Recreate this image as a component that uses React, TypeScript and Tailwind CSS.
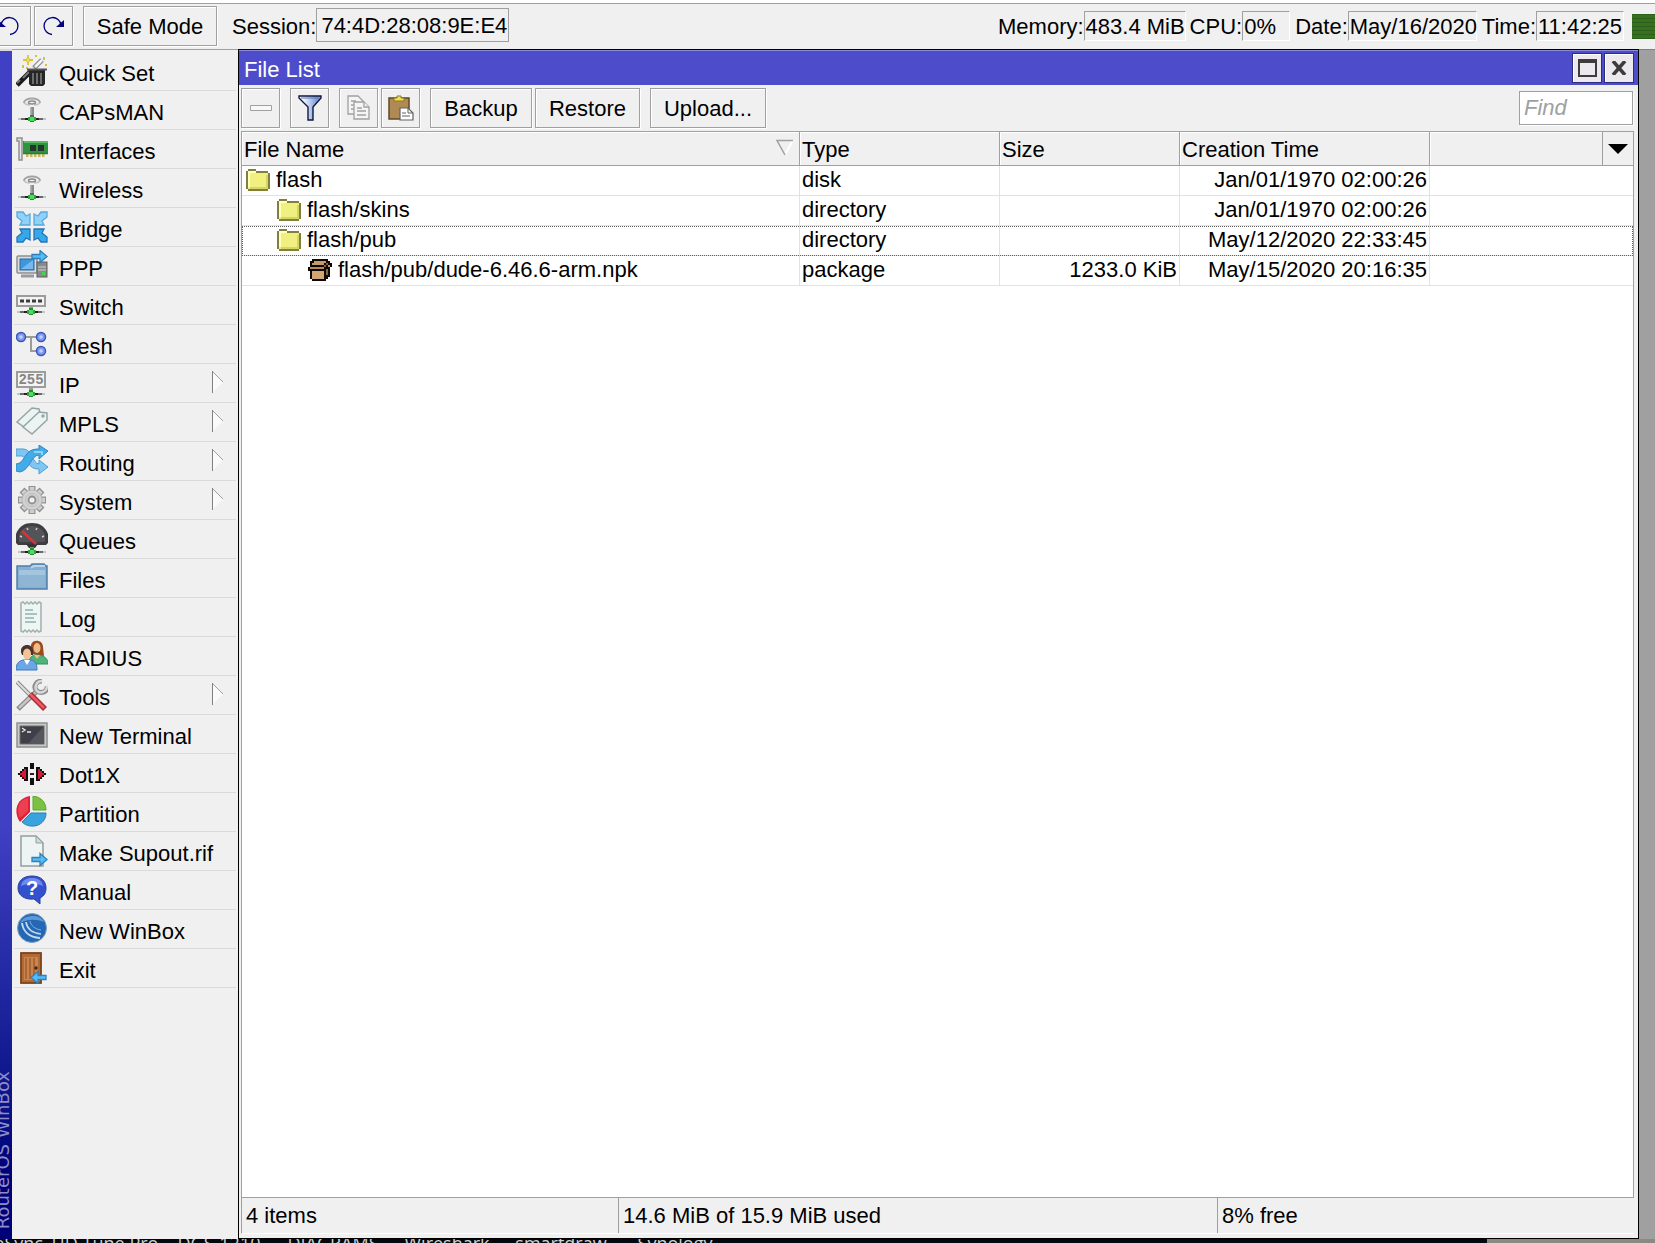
import { ReactNode } from 'react'

const BEVEL = 'border border-[#a0a0a0] shadow-[1px_1px_0_#fff,inset_1px_1px_0_#fff]'

/* ---------- shared icon parts ---------- */

function Net({ x = 16, y }: { x?: number; y: number }) {
  return (
    <g shapeRendering="crispEdges">
      <rect x={x - 14} y={y - 1} width="28" height="2" fill="#c4c4c4" />
      <rect x={x - 11} y={y - 1} width="22" height="2" fill="#6a6a6a" />
      <rect x={x - 7} y={y - 1} width="14" height="2" fill="#202020" />
      <rect x={x - 2} y={y - 4} width="4" height="7" fill="#268a34" />
      <rect x={x - 4} y={y - 2} width="8" height="4" fill="#2fa53f" />
      <rect x={x - 2} y={y - 2} width="4" height="4" fill="#4fdc5e" />
    </g>
  )
}

function BlueArrow({ x, y, flip }: { x: number; y: number; flip?: boolean }) {
  return (
    <path
      d="M0 4.500h8V.5l7 6-7 6v-4H0z"
      fill="#55bdf5"
      stroke="#2f7fbd"
      strokeWidth="1.300"
      transform={flip ? `translate(${x + 15} ${y}) scale(-1 1)` : `translate(${x} ${y})`}
    />
  )
}

const antenna = (
  <>
    <path d="M8 9c0-6 16-6 16 0" fill="none" stroke="#a4a4a4" strokeWidth="2" />
    <path d="M8 9c2 2 4 2 6 2M24 9c-2 2-4 2-6 2" fill="none" stroke="#c2c2c2" strokeWidth="1.500" />
    <ellipse cx="16" cy="8.500" rx="3.500" ry="1.500" fill="#eee" stroke="#8a8a8a" strokeWidth="1.500" />
    <rect x="14" y="13" width="4" height="10" fill="#8c8c8c" />
    <rect x="14" y="13" width="1.500" height="10" fill="#b4b4b4" />
    <Net y={25} />
  </>
)

const icons: Record<string, ReactNode> = {
  wizard: (
    <>
      <path d="M12 0v10M7 5h10" stroke="#dcc436" strokeWidth="1.800" />
      <path d="M9.500 2.500l5 5m0-5l-5 5" stroke="#eadb7c" />
      <path d="M20 0v2M28 2v3M7 10v3M30 9v2M11 12v2" stroke="#d8c040" strokeWidth="2" />
      <path d="M18 13l8-8" stroke="#8a8a8a" strokeWidth="5" />
      <path d="M19 12l7-7" stroke="#f4f4f4" strokeWidth="2.500" />
      <path d="M1 30l14-14" stroke="#1a1a1a" strokeWidth="5" />
      <path d="M1 28l3-3M7 23l6-6" stroke="#777" strokeWidth="2" />
      <path d="M13 15h16v14l-2 2H15l-2-2z" fill="#262626" />
      <path d="M17 18v11M21 18v11M25 18v11" stroke="#6c6c6c" strokeWidth="2" />
      <path d="M11 14.500h20" stroke="#555" strokeWidth="2" />
    </>
  ),
  antenna,
  card: (
    <>
      <path d="M1 5h5v22H3V8H1z" fill="#e4e4e4" stroke="#909090" strokeWidth="1.500" />
      <rect x="7" y="8" width="25" height="12" fill="#2f9440" />
      <rect x="8" y="8" width="24" height="2" fill="#5cb968" />
      <rect x="14" y="12" width="6" height="6" fill="#26352a" />
      <rect x="22" y="12" width="6" height="6" fill="#26352a" />
      <path d="M10 22h20" stroke="#c9b75a" strokeWidth="4" strokeDasharray="2.500 1.500" />
      <path d="M7 20.500h25" stroke="#2d7a3a" strokeWidth="1.500" />
    </>
  ),
  bridge: (
    <g strokeWidth="1.300">
      <g fill="#8ed2fa" stroke="#5aa8dc">
        <path d="M1 1h6l3 4 4-2v11H4l2-4-5-4z" />
        <path d="M31 1h-6l-3 4-4-2v11h10l-2-4 5-4z" />
      </g>
      <g fill="#35a8ec" stroke="#2474b4">
        <path d="M1 31h6l3-4 4 2V18H4l2 4-5 4z" />
        <path d="M31 31h-6l-3-4-4 2V18h10l-2 4 5 4z" />
      </g>
    </g>
  ),
  ppp: (
    <>
      <rect x="1" y="6" width="20" height="17" rx="1" fill="#dcdcdc" stroke="#8a8f94" strokeWidth="1.500" />
      <rect x="4" y="9" width="14" height="11" fill="#3f97da" stroke="#2a69a2" />
      <path d="M5 19L17 10v9z" fill="#74baf0" />
      <path d="M5 26h13" stroke="#9a9a9a" strokeWidth="3" />
      <rect x="21" y="12" width="10" height="15" fill="#8a8a8a" stroke="#5e5e5e" />
      <path d="M22 17h8M22 20h8" stroke="#d0d0d0" />
      <rect x="26" y="22" width="3" height="3" fill="#43d54e" />
      <BlueArrow x={16} y={0} />
    </>
  ),
  switch: (
    <>
      <rect x="1" y="7" width="28" height="10" fill="#f2f2f2" stroke="#9c9c9c" strokeWidth="2" />
      <path d="M4 12h22" stroke="#3c3c3c" strokeWidth="3" strokeDasharray="4 2" />
      <rect x="13" y="18" width="4" height="3" fill="#999" />
      <Net x={15} y={23} />
    </>
  ),
  mesh: (
    <>
      <path d="M9 9h12M15 9v14h6" fill="none" stroke="#9c9c9c" strokeWidth="2" />
      {[[5, 9], [25, 9], [25, 23]].map(([cx, cy]) => (
        <g key={`${cx}-${cy}`}>
          <circle cx={cx} cy={cy} r="4.500" fill="#7d98ee" stroke="#3b57b8" strokeWidth="1.500" />
          <circle cx={cx} cy={cy} r="1.800" fill="#c3d0fb" />
        </g>
      ))}
    </>
  ),
  ip: (
    <>
      <rect x="1" y="5" width="28" height="15" fill="#f4f4f4" stroke="#9c9c9c" strokeWidth="2" />
      <text x="15" y="17" textAnchor="middle" fontSize="14" fontWeight="700" fill="#858585" fontFamily="Liberation Mono, monospace">
        255
      </text>
      <rect x="13" y="21" width="4" height="4" fill="#999" />
      <Net x={15} y={27} />
    </>
  ),
  tags: (
    <g fill="#ecf4f3" stroke="#93a6a4" strokeWidth="1.500">
      <path d="M1 16L16 2l7 1 1 4L8 21z" />
      <path d="M7 21L23 6l8 1v7L16 28z" />
      <circle cx="27" cy="10" r="1" />
    </g>
  ),
  routing: (
    <>
      <path d="M0 4h8c8 1 9 15 15 15v-4l9 7-9 7v-5C12 25 11 12 6 11H0z" fill="#7fc6f3" stroke="#4d9fd4" />
      <path d="M0 26v-7c9 0 8-15 21-15h2V0l9 6-9 8v-4c-8 0-9 15-19 17z" fill="#42abe9" stroke="#3387c4" />
      <path d="M18 7h8v3" fill="none" stroke="#8ed2fa" strokeWidth="2" />
    </>
  ),
  gear: (
    <>
      <g stroke="#929292" strokeWidth="7">
        <path d="M16 2v28M2 16h28M6 6l20 20M26 6L6 26" />
      </g>
      <g stroke="#cfcfcf" strokeWidth="4.500">
        <path d="M16 3v26M3 16h26M7 7l18 18M25 7L7 25" />
      </g>
      <circle cx="16" cy="16" r="10" fill="#d2d2d2" stroke="#b4b4b4" />
      <circle cx="16" cy="16" r="6.500" fill="none" stroke="#bcbcbc" />
      <circle cx="16" cy="16" r="3.500" fill="#efefef" stroke="#8c8c8c" strokeWidth="1.800" />
    </>
  ),
  gauge: (
    <>
      <path d="M0 20v-9C3 3 9 0 16 0s13 3 16 11v9l-2 2H2z" fill="#3d3d42" />
      <path d="M3 19v-7C5 6 10 3 16 3s11 3 13 9v7z" fill="#53535a" />
      <path d="M4 13l2 1M11 5l1 2M21 5l-1 2M28 13l-2 1" stroke="#ccc" strokeWidth="1.500" />
      <path d="M10 21h12l-3 4h-6z" fill="#333" />
      <path d="M6 8l14 13" stroke="#d43535" strokeWidth="2.500" />
      <rect x="14" y="24" width="4" height="3" fill="#888" />
      <Net y={29} />
    </>
  ),
  folder: (
    <>
      <path d="M1 27V4h13l2-2h12l2 2h1v23z" fill="#86aed0" stroke="#4f7fa8" strokeWidth="1.500" />
      <path d="M15 6l3-2h11" fill="none" stroke="#b9d5ea" strokeWidth="2" />
      <path d="M3 25V8h26v17z" fill="#8fb5d5" />
      <path d="M3 8h26v5H3z" fill="#a3c5df" />
    </>
  ),
  log: (
    <>
      <path d="M5 2l2-1 2 2 2-2 2 2 2-2 2 2 2-2 2 2 2-2 2 1v28l-2 1-2-2-2 2-2-2-2 2-2-2-2 2-2-2-2 2-2-1z" fill="#eef6f4" stroke="#9fb0ad" strokeWidth="1.500" />
      <path d="M9 9h8M9 13h12M9 17h9M9 21h11" stroke="#a9c2bf" strokeWidth="1.800" />
    </>
  ),
  people: (
    <>
      <path d="M15 14V5c1-6 12-6 12 2l1 9z" fill="#9a4a1c" />
      <ellipse cx="21" cy="8" rx="3.500" ry="5" fill="#f0bb88" />
      <path d="M13 24c0-7 3-9 8-9s11 2 11 9z" fill="#4fb47a" stroke="#37915c" />
      <path d="M18 15l3 4 3-4z" fill="#f0bb88" />
      <path d="M5 12c-1-9 12-9 12-1v4H6z" fill="#4a3327" />
      <ellipse cx="11" cy="14" rx="4" ry="5.500" fill="#f2c398" />
      <path d="M0 30c0-8 4-9 7-10h8c4 1 6 3 6 10z" fill="#6ca6e4" stroke="#3e78bb" />
      <path d="M8 20l3 5 3-5z" fill="#fff" />
    </>
  ),
  tools: (
    <>
      <path d="M2 30L22 11" stroke="#858585" strokeWidth="5" />
      <path d="M3 29L22 11" stroke="#c6c6c6" strokeWidth="2.500" />
      <path d="M26 2c-7 0-9 7-5 10s11 1 10-5" fill="none" stroke="#8d8d8d" strokeWidth="5" />
      <path d="M26 2c-6 0-8 7-5 10s10 1 10-5" fill="none" stroke="#d8d8d8" strokeWidth="2.500" />
      <path d="M1 3l14 14" stroke="#8a8a8a" strokeWidth="4" />
      <path d="M1 3l14 14" stroke="#e2e2e2" strokeWidth="1.800" />
      <path d="M14 15l15 15" stroke="#b02a33" strokeWidth="5.500" />
      <path d="M14 15l14 14" stroke="#ee5a62" strokeWidth="2.500" />
    </>
  ),
  terminal: (
    <>
      <rect x="1" y="5" width="30" height="24" fill="#c9c9c9" stroke="#8f8f8f" strokeWidth="1.500" />
      <rect x="4" y="8" width="24" height="18" fill="#3f3f47" stroke="#6f6f6f" />
      <path d="M28 8v18H12z" fill="#56565e" />
      <path d="M6 10l3 2-3 2M11 14h4" fill="none" stroke="#e6e6e6" strokeWidth="1.500" />
    </>
  ),
  dot1x: (
    <g shapeRendering="crispEdges">
      <path d="M2 16h2v-2h2v-2h2v-2h4v14H8v-2H6v-2H4v-2H2zM30 16h-2v-2h-2v-2h-2v-2h-4v14h4v-2h2v-2h2v-2h2z" fill="#111" />
      <path d="M4 16h2v-2h2v-2h2v10H8v-2H6v-2H4zM28 16h-2v-2h-2v-2h-2v10h2v-2h2v-2h2z" fill="#d01c38" />
      <rect x="14" y="6" width="4" height="22" fill="#111" />
      <rect x="13" y="12" width="6" height="9" fill="#efefef" />
      <rect x="14" y="16" width="4" height="2" fill="#222" />
    </g>
  ),
  pie: (
    <>
      <path d="M14 0v16L4 26C-3 16 0 2 14 0z" fill="#e0203a" />
      <path d="M12 2v13l-8 7C0 14 2 4 12 2z" fill="#ec3f50" />
      <path d="M17 0c8 1 13 6 13 14H17z" fill="#7cc242" stroke="#5fa52c" />
      <path d="M15 17h15c0 13-16 17-24 9z" fill="#38a3dc" stroke="#2480b4" />
    </>
  ),
  supout: (
    <>
      <path d="M5 1h15l7 7v23H5z" fill="#eef4f3" stroke="#8fa09e" strokeWidth="1.500" />
      <path d="M20 1v7h7z" fill="#cfdad8" stroke="#8fa09e" />
      <BlueArrow x={16} y={18} />
    </>
  ),
  manual: (
    <>
      <path d="M16 2c9 0 14 5 14 12 0 5-2 8-6 10v6l-6-5C8 26 2 21 2 14S7 2 16 2z" fill="#3350cf" stroke="#27409f" />
      <path d="M5 12C6 5 12 4 16 4s10 1 11 8c-7-3-15-3-22 0z" fill="#6f8af0" />
      <text x="16" y="21" textAnchor="middle" fontSize="20" fontWeight="700" fill="#fff" fontFamily="Liberation Sans, sans-serif">
        ?
      </text>
    </>
  ),
  winbox: (
    <>
      <circle cx="16" cy="15" r="14.500" fill="#2467b4" stroke="#7f9fc2" />
      <path d="M4 10C7 2 24 0 28 9 20 6 12 6 4 10z" fill="#5c9ad6" />
      <g fill="none" stroke="#c4daf0">
        <path d="M6 10c1 8 7 14 18 15" strokeWidth="2" />
        <path d="M10 9c1 7 6 11 15 12" strokeWidth="1.700" />
        <path d="M14 8c1 5 5 8 11 9" stroke="#7fb0de" />
      </g>
    </>
  ),
  exit: (
    <>
      <rect x="5" y="1" width="20" height="30" fill="#b06a38" stroke="#7d4318" strokeWidth="1.800" />
      <path d="M8 5h14v23H8z" fill="#c98450" />
      <path d="M10 6v21M14 6v21M18 6v21" stroke="#a15c2c" strokeWidth="1.500" />
      <circle cx="20" cy="16" r="1.800" fill="#4c2a10" />
      <BlueArrow x={15} y={19} flip />
    </>
  ),
}

type MenuItem = { label: string; icon: string; sub?: boolean }

const menu: MenuItem[] = [
  { label: 'Quick Set', icon: 'wizard' },
  { label: 'CAPsMAN', icon: 'antenna' },
  { label: 'Interfaces', icon: 'card' },
  { label: 'Wireless', icon: 'antenna' },
  { label: 'Bridge', icon: 'bridge' },
  { label: 'PPP', icon: 'ppp' },
  { label: 'Switch', icon: 'switch' },
  { label: 'Mesh', icon: 'mesh' },
  { label: 'IP', icon: 'ip', sub: true },
  { label: 'MPLS', icon: 'tags', sub: true },
  { label: 'Routing', icon: 'routing', sub: true },
  { label: 'System', icon: 'gear', sub: true },
  { label: 'Queues', icon: 'gauge' },
  { label: 'Files', icon: 'folder' },
  { label: 'Log', icon: 'log' },
  { label: 'RADIUS', icon: 'people' },
  { label: 'Tools', icon: 'tools', sub: true },
  { label: 'New Terminal', icon: 'terminal' },
  { label: 'Dot1X', icon: 'dot1x' },
  { label: 'Partition', icon: 'pie' },
  { label: 'Make Supout.rif', icon: 'supout' },
  { label: 'Manual', icon: 'manual' },
  { label: 'New WinBox', icon: 'winbox' },
  { label: 'Exit', icon: 'exit' },
]

type FileRow = {
  name: string
  type: string
  size?: string
  created: string
  indent: string
  focused?: boolean
}

const files: FileRow[] = [
  { name: 'flash', type: 'disk', created: 'Jan/01/1970 02:00:26', indent: 'pl-1' },
  { name: 'flash/skins', type: 'directory', created: 'Jan/01/1970 02:00:26', indent: 'pl-[35px]' },
  { name: 'flash/pub', type: 'directory', created: 'May/12/2020 22:33:45', indent: 'pl-[35px]', focused: true },
  { name: 'flash/pub/dude-6.46.6-arm.npk', type: 'package', size: '1233.0 KiB', created: 'May/15/2020 20:16:35', indent: 'pl-[66px]' },
]

function DirIcon() {
  return (
    <svg width="24" height="22" viewBox="0 0 24 22" shapeRendering="crispEdges" aria-hidden="true">
      <path d="M2 0h8v2h12v2h2v16h-2v2H2v-2H0V2h2z" fill="#80803c" />
      <path d="M2 2h8v2h12v16H2z" fill="#f0f080" />
      <path d="M2 2h8v2H4v14H2z" fill="#ffffc0" />
      <path d="M20 6h2v14H4v-2h16z" fill="#d4d468" />
    </svg>
  )
}

function PackageIcon() {
  return (
    <svg width="24" height="22" viewBox="0 0 24 22" shapeRendering="crispEdges" aria-hidden="true">
      <path d="M4 0h16v2h2v2h2v4h-2v10h-2v2h-2v2H4v-2H2v-8H0V8h2V2h2z" fill="#0c0806" />
      <path d="M6 2h12v2h-2v2H4V4h2z" fill="#c79a66" />
      <path d="M18 4h2v2h-2v2h-2V6h2z" fill="#8a6238" />
      <path d="M2 8h14v2H2z" fill="#b58a58" />
      <path d="M4 12h12v8H4z" fill="#d2a672" />
      <path d="M18 10h2v6h-2z" fill="#8a6238" />
      <path d="M20 6h2v2h-2z" fill="#c79a66" />
    </svg>
  )
}

function ToolButton({ label, children, align = 'justify-center' }: { label: string; children: ReactNode; align?: string }) {
  return (
    <button aria-label={label} className={`flex h-10 w-[39px] shrink-0 items-center ${align} ${BEVEL}`}>
      {children}
    </button>
  )
}

function Stat({ label, value, width, gap }: { label: string; value: string; width: string; gap: string }) {
  return (
    <div className={`flex items-center ${gap}`}>
      <span className="pt-[2px]">{label}:</span>
      <span className={`h-[30px] whitespace-nowrap border border-t-[#a0a0a0] border-l-[#a0a0a0] border-r-white border-b-white px-px leading-[30px] ${width}`}>
        {value}
      </span>
    </div>
  )
}

function TopBar() {
  return (
    <header className="flex h-[49px] shrink-0 border-t-[3px] border-white bg-[#f0f0f0]">
      <div className="flex flex-1 items-start border-t border-[#a0a0a0] pt-[2px]">
        <div className="-ml-2 flex gap-[3px]">
          <ToolButton label="Undo" align="justify-start pl-1">
            <svg width="24" height="20" viewBox="0 0 24 20" aria-hidden="true">
              <path d="M4 9a8.500 8.500 0 1 1 9 9.500" fill="none" stroke="#000080" strokeWidth="1.300" />
              <path d="M1 4v7h8z" fill="#000080" />
            </svg>
          </ToolButton>
          <ToolButton label="Redo" align="justify-start pl-[6px]">
            <svg width="24" height="20" viewBox="0 0 24 20" aria-hidden="true">
              <path d="M20 9a8.500 8.500 0 1 0-9 9.500" fill="none" stroke="#000080" strokeWidth="1.300" />
              <path d="M23 4v7h-8z" fill="#000080" />
            </svg>
          </ToolButton>
        </div>
        <button className={`ml-[10px] h-10 w-[134px] shrink-0 pt-[2px] ${BEVEL}`}>Safe Mode</button>
        <label htmlFor="session" className="ml-[15px] leading-[42px]">Session:</label>
        <input
          id="session"
          readOnly
          defaultValue="74:4D:28:08:9E:E4"
          className="mt-[2px] h-[34px] w-[193px] border border-[#a0a0a0] bg-transparent pt-[2px] pl-1 outline-none"
        />
        <div className="mt-[5px] ml-auto flex items-center">
          <Stat label="Memory" value="483.4 MiB" width="w-[102px]" gap="mr-1" />
          <Stat label="CPU" value="0%" width="w-12" gap="mr-[5px]" />
          <Stat label="Date" value="May/16/2020" width="w-[129px]" gap="mr-[5px]" />
          <Stat label="Time" value="11:42:25" width="w-[88px]" gap="mr-2" />
          <div className="h-[25px] w-[23px] bg-[repeating-linear-gradient(#2a5f1c_0_1px,#38701f_1px_4px)]" />
        </div>
      </div>
    </header>
  )
}

function SideMenu() {
  return (
    <nav className="w-[226px] shrink-0 border-t border-[#a0a0a0] px-[2px] pt-[2px]">
      {menu.map(({ label, icon, sub }) => (
        <button key={label} className="flex h-[39px] w-full items-center border-b border-[#dadada] pl-[2px] text-left">
          <svg width="32" height="32" viewBox="0 0 32 32" className="shrink-0" aria-hidden="true">
            {icons[icon]}
          </svg>
          <span className="ml-[11px] flex-1 pt-[6px] whitespace-nowrap">{label}</span>
          {sub && (
            <svg width="12" height="22" viewBox="0 0 12 22" className="mr-3 -mt-[2px]" aria-hidden="true">
              <path d="M1 1l10 10L1 21z" fill="#fafafa" />
              <path d="M.5 0v22" stroke="#808080" />
              <path d="M1 1l10 10" stroke="#a0a0a0" />
            </svg>
          )}
        </button>
      ))}
    </nav>
  )
}

function FileTable() {
  const th = 'border-r border-b border-[#a0a0a0] px-[2px] pt-[2px] pb-0 text-left font-normal shadow-[inset_1px_1px_0_#fff]'
  const td = 'border-r border-b border-[#e2e2e2] px-[2px] py-0'
  return (
    <table className="w-full table-fixed border-separate border-spacing-0 whitespace-nowrap">
      <colgroup>
        <col className="w-[558px]" />
        <col className="w-[200px]" />
        <col className="w-[180px]" />
        <col className="w-[250px]" />
        <col />
        <col className="w-[30px]" />
      </colgroup>
      <thead className="bg-[#f0f0f0]">
        <tr className="h-[34px]">
          <th className={th}>
            <div className="flex items-center justify-between pr-[3px]">
              File Name
              <svg width="18" height="18" viewBox="0 0 18 18" className="-mt-1" aria-hidden="true">
                <path d="M17 1L9 16" stroke="#fff" strokeWidth="2" />
                <path d="M17 1.500H1L9 16" fill="none" stroke="#a0a0a0" strokeWidth="1.500" />
              </svg>
            </div>
          </th>
          <th className={th}>Type</th>
          <th className={th}>Size</th>
          <th className={th}>Creation Time</th>
          <th className={th} />
          <th className="border-b border-[#a0a0a0] p-0">
            <button aria-label="Select columns" className="flex w-full justify-center">
              <svg width="20" height="10" viewBox="0 0 20 10" aria-hidden="true">
                <path d="M0 0h20L10 10z" />
              </svg>
            </button>
          </th>
        </tr>
      </thead>
      <tbody>
        {files.map((f) => (
          <tr
            key={f.name}
            className={`h-[30px] leading-7 ${f.focused ? 'outline outline-dotted outline-[#606060] -outline-offset-1' : ''}`}
          >
            <td className={`${td} align-top ${f.indent}`}>
              <div className="flex items-center gap-[6px]">
                {f.type === 'package' ? <PackageIcon /> : <DirIcon />}
                {f.name}
              </div>
            </td>
            <td className={`${td} align-top`}>{f.type}</td>
            <td className={`${td} text-right align-top`}>{f.size}</td>
            <td className={`${td} text-right align-top`}>{f.created}</td>
            <td className="border-b border-[#e2e2e2]" colSpan={2} />
          </tr>
        ))}
      </tbody>
    </table>
  )
}

function FileWindow() {
  return (
    <section className="flex min-w-0 flex-1 flex-col border border-black">
      <div className="flex h-[35px] shrink-0 items-center border-t border-[#8c8cd8] bg-[#4d4dcb] pr-1 pl-[5px] text-white">
        <h1 className="flex-1 pt-1">File List</h1>
        <div className="flex gap-[2px]">
          <button aria-label="Maximize" className="flex h-[30px] w-[30px] items-center justify-center border border-[#2c2c80] bg-[#ebe8ee] shadow-[inset_1px_1px_0_#fff]">
            <svg width="19" height="18" viewBox="0 0 19 18" aria-hidden="true">
              <path d="M1 3v14h17V3" fill="none" stroke="#3c3c3c" strokeWidth="2" />
              <path d="M0 2h19" stroke="#3c3c3c" strokeWidth="4" />
            </svg>
          </button>
          <button aria-label="Close" className="flex h-[30px] w-[30px] items-center justify-center border border-[#2c2c80] bg-[#ebe8ee] shadow-[inset_1px_1px_0_#fff]">
            <svg width="16" height="14" viewBox="0 0 16 14" aria-hidden="true">
              <path d="M2 0l12 14M14 0L2 14" stroke="#3c3c3c" strokeWidth="3.500" />
            </svg>
          </button>
        </div>
      </div>

      <div className="flex h-[46px] shrink-0 items-start pt-[3px] pr-[5px] pl-[2px]">
        <ToolButton label="Remove">
          <svg width="22" height="6" viewBox="0 0 22 6" aria-hidden="true">
            <path d="M.5.5h21v5H.5z" fill="#f8f8f8" stroke="#a0a0a0" />
          </svg>
        </ToolButton>
        <div className="w-[10px]" />
        <ToolButton label="Filter">
          <svg width="24" height="26" viewBox="0 0 24 26" aria-hidden="true">
            <defs>
              <linearGradient id="funnel">
                <stop offset="0.2" stopColor="#f4f8ff" />
                <stop offset="0.800" stopColor="#7c9cdc" />
              </linearGradient>
            </defs>
            <path d="M1 1h22v2l-8 9v13h-5V12L1 3z" fill="url(#funnel)" stroke="#10183c" strokeWidth="1.400" />
            <path d="M3 3h18" stroke="#5a78b8" />
          </svg>
        </ToolButton>
        <div className="w-[10px]" />
        <ToolButton label="Copy">
          <svg width="24" height="26" viewBox="0 0 24 26" fill="#f4f4f4" stroke="#a0a0a0" strokeWidth="1.300" aria-hidden="true">
            <path d="M1 1h10l5 5v13H1z" />
            <path d="M4 6h5M4 10h5M4 14h5" />
            <path d="M7 7h10l5 5v12H7z" />
            <path d="M17 7v5h5M10 13h5M10 16h9M10 20h9" />
          </svg>
        </ToolButton>
        <div className="w-[3px]" />
        <ToolButton label="Paste">
          <svg width="26" height="26" viewBox="0 0 26 26" aria-hidden="true">
            <path d="M1 3h20v21H1z" fill="#b08a54" stroke="#5f4826" strokeWidth="1.500" />
            <path d="M6 6V3h3V1h4v2h3v3z" fill="#f2dc60" stroke="#8a7a20" />
            <path d="M12 13h8l5 5v7H12z" fill="#fff" stroke="#606060" strokeWidth="1.200" />
            <path d="M20 13v5h5M14 18h4M14 21h8" fill="none" stroke="#606060" />
          </svg>
        </ToolButton>
        <button className={`ml-[10px] h-10 w-[102px] pt-[2px] ${BEVEL}`}>Backup</button>
        <button className={`ml-[3px] h-10 w-[105px] pt-[2px] ${BEVEL}`}>Restore</button>
        <button className={`ml-[10px] h-10 w-[116px] pt-[2px] ${BEVEL}`}>Upload...</button>
        <input
          aria-label="Find"
          placeholder="Find"
          className="mt-[3px] ml-auto h-[34px] w-[114px] border border-[#a0a0a0] bg-white pl-1 italic shadow-[1px_1px_0_#fff] outline-none placeholder:text-[#a0a0a0]"
        />
      </div>

      <div className="mr-1 ml-[2px] flex flex-1 flex-col border border-[#a0a0a0] bg-white">
        <FileTable />
      </div>
      <footer className="mr-1 mb-1 ml-[2px] flex h-9 shrink-0 border-b border-l border-b-white border-l-[#a0a0a0] leading-9">
        <div className="w-[376px] pl-1">4 items</div>
        <div className="w-[599px] border-l border-[#a0a0a0] pl-1">14.6 MiB of 15.9 MiB used</div>
        <div className="flex-1 border-l border-[#a0a0a0] pl-1">8% free</div>
      </footer>
    </section>
  )
}

const shortcuts = ['FreeFileSync', 'HD Tune Pro', 'DGS-1210', 'DIAGRAMS', 'Wireshark', 'smartdraw', 'Synology']

export default function App() {
  return (
    <div className="flex h-screen flex-col overflow-hidden bg-[#f0f0f0] font-['Liberation_Sans',Arial,sans-serif] text-[22px] leading-[26px] text-black">
      <TopBar />
      <main className="flex min-h-0 flex-1">
        <div className="flex w-3 shrink-0 flex-col items-end justify-end overflow-hidden border-t-2 border-[#d8d8d8] bg-linear-to-b from-[#4040c4] from-65% to-[#000078] to-95% pb-[10px]">
          <div className="rotate-180 font-['DejaVu_Sans',sans-serif] text-lg leading-[18px] whitespace-nowrap text-[#8c8cc8] [writing-mode:vertical-rl]">
            RouterOS WinBox
          </div>
        </div>
        <SideMenu />
        <FileWindow />
        <div className="w-4 shrink-0 border-t border-[#808080] bg-[#a0a0a0]" />
      </main>
      {/* sliver of the desktop below the window */}
      <div className="flex h-1 shrink-0 overflow-hidden bg-[#05070f] font-['Open_Sans',sans-serif] text-lg leading-[8px] text-[#d0d0d0]">
        <div className="-ml-[66px] flex flex-1">
          {shortcuts.map((s) => (
            <span key={s} className="w-[114px] shrink-0 text-center whitespace-nowrap">{s}</span>
          ))}
        </div>
        <div className="w-[168px] bg-[#8a8a82]" />
      </div>
    </div>
  )
}
